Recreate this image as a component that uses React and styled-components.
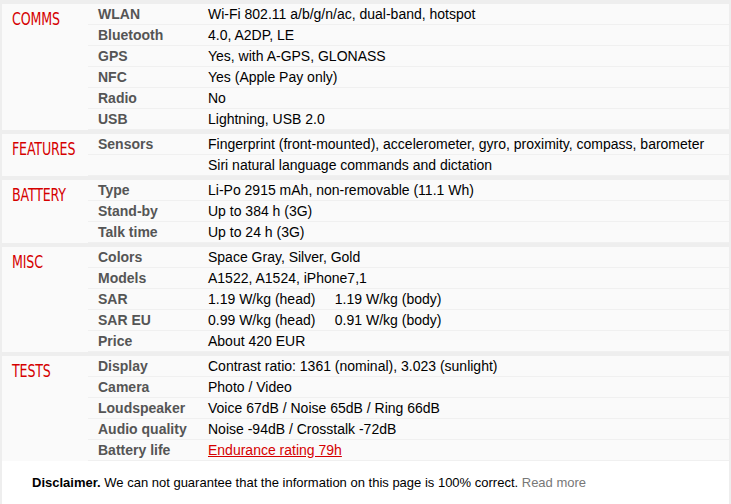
import React from "react";
import styled, { createGlobalStyle } from "styled-components";

const GlobalStyle = createGlobalStyle`
  html, body {
    margin: 0;
    padding: 0;
    background: #eeeeee;
    overflow: hidden;
  }
  body {
    font-family: "Liberation Sans", Arial, sans-serif;
  }
`;

const Page = styled.div`
  margin: 0 2px;
  background: #ffffff;
  min-height: 504px;
`;

const Section = styled.section`
  display: flex;
  border-top: 4px solid #eeeeee;
  background: #fafafa;
`;

const Category = styled.h2`
  margin: 0;
  width: 86px;
  flex: none;
  box-sizing: border-box;
  padding: 4px 10px 0 10px;
  font-family: "DejaVu Sans Condensed", "Liberation Sans", sans-serif;
  font-weight: normal;
  font-size: 18px;
  line-height: 22px;
  color: #d50000;
  text-transform: uppercase;
  white-space: nowrap;
`;

const CategoryText = styled.span`
  display: inline-block;
  transform: scaleX(0.78);
  transform-origin: left center;
  letter-spacing: -0.2px;
`;

const Rows = styled.div`
  flex: 1;
  min-width: 0;
`;

const Row = styled.div`
  display: flex;
  border-bottom: 1px solid #f0f0f0;
`;

const Label = styled.div`
  width: 110px;
  flex: none;
  box-sizing: border-box;
  padding: 2px 10px;
  font-weight: bold;
  font-size: 14px;
  line-height: 16px;
  color: #555555;
  white-space: nowrap;
`;

const Value = styled.div`
  flex: 1;
  padding: 2px 10px;
  font-size: 14px;
  line-height: 16px;
  color: #000000;
  white-space: pre;
`;

const Link = styled.a`
  color: #d50000;
  text-decoration: underline;
`;

const Disclaimer = styled.p`
  margin: 0;
  padding: 14px 30px 13px;
  font-size: 13px;
  line-height: 16px;
  color: #000000;
  background: #ffffff;
`;

const Strong = styled.strong`
  font-weight: bold;
`;

const More = styled.a`
  color: #777777;
  text-decoration: none;
`;

const gap = "\u00a0\u00a0\u00a0\u00a0\u00a0";

const sections = [
  {
    title: "Comms",
    rows: [
      ["WLAN", "Wi-Fi 802.11 a/b/g/n/ac, dual-band, hotspot"],
      ["Bluetooth", "4.0, A2DP, LE"],
      ["GPS", "Yes, with A-GPS, GLONASS"],
      ["NFC", "Yes (Apple Pay only)"],
      ["Radio", "No"],
      ["USB", "Lightning, USB 2.0"],
    ],
  },
  {
    title: "Features",
    rows: [
      ["Sensors", "Fingerprint (front-mounted), accelerometer, gyro, proximity, compass, barometer"],
      ["", "Siri natural language commands and dictation"],
    ],
  },
  {
    title: "Battery",
    rows: [
      ["Type", "Li-Po 2915 mAh, non-removable (11.1 Wh)"],
      ["Stand-by", "Up to 384 h (3G)"],
      ["Talk time", "Up to 24 h (3G)"],
    ],
  },
  {
    title: "Misc",
    rows: [
      ["Colors", "Space Gray, Silver, Gold"],
      ["Models", "A1522, A1524, iPhone7,1"],
      ["SAR", `1.19 W/kg (head)${gap}1.19 W/kg (body)`],
      ["SAR EU", `0.99 W/kg (head)${gap}0.91 W/kg (body)`],
      ["Price", "About 420 EUR"],
    ],
  },
  {
    title: "Tests",
    rows: [
      ["Display", "Contrast ratio: 1361 (nominal), 3.023 (sunlight)"],
      ["Camera", "Photo / Video"],
      ["Loudspeaker", "Voice 67dB / Noise 65dB / Ring 66dB"],
      ["Audio quality", "Noise -94dB / Crosstalk -72dB"],
      ["Battery life", { link: "Endurance rating 79h" }],
    ],
  },
];

export default function App() {
  return (
    <>
      <GlobalStyle />
      <Page>
        {sections.map((s) => (
          <Section key={s.title}>
            <Category>
              <CategoryText>{s.title}</CategoryText>
            </Category>
            <Rows>
              {s.rows.map(([label, value], i) => (
                <Row key={i}>
                  <Label>{label}</Label>
                  <Value>
                    {typeof value === "string" ? value : <Link href="#">{value.link}</Link>}
                  </Value>
                </Row>
              ))}
            </Rows>
          </Section>
        ))}
        <Disclaimer>
          <Strong>Disclaimer.</Strong> We can not guarantee that the information on this page is 100% correct.{" "}
          <More href="#">Read more</More>
        </Disclaimer>
      </Page>
    </>
  );
}
